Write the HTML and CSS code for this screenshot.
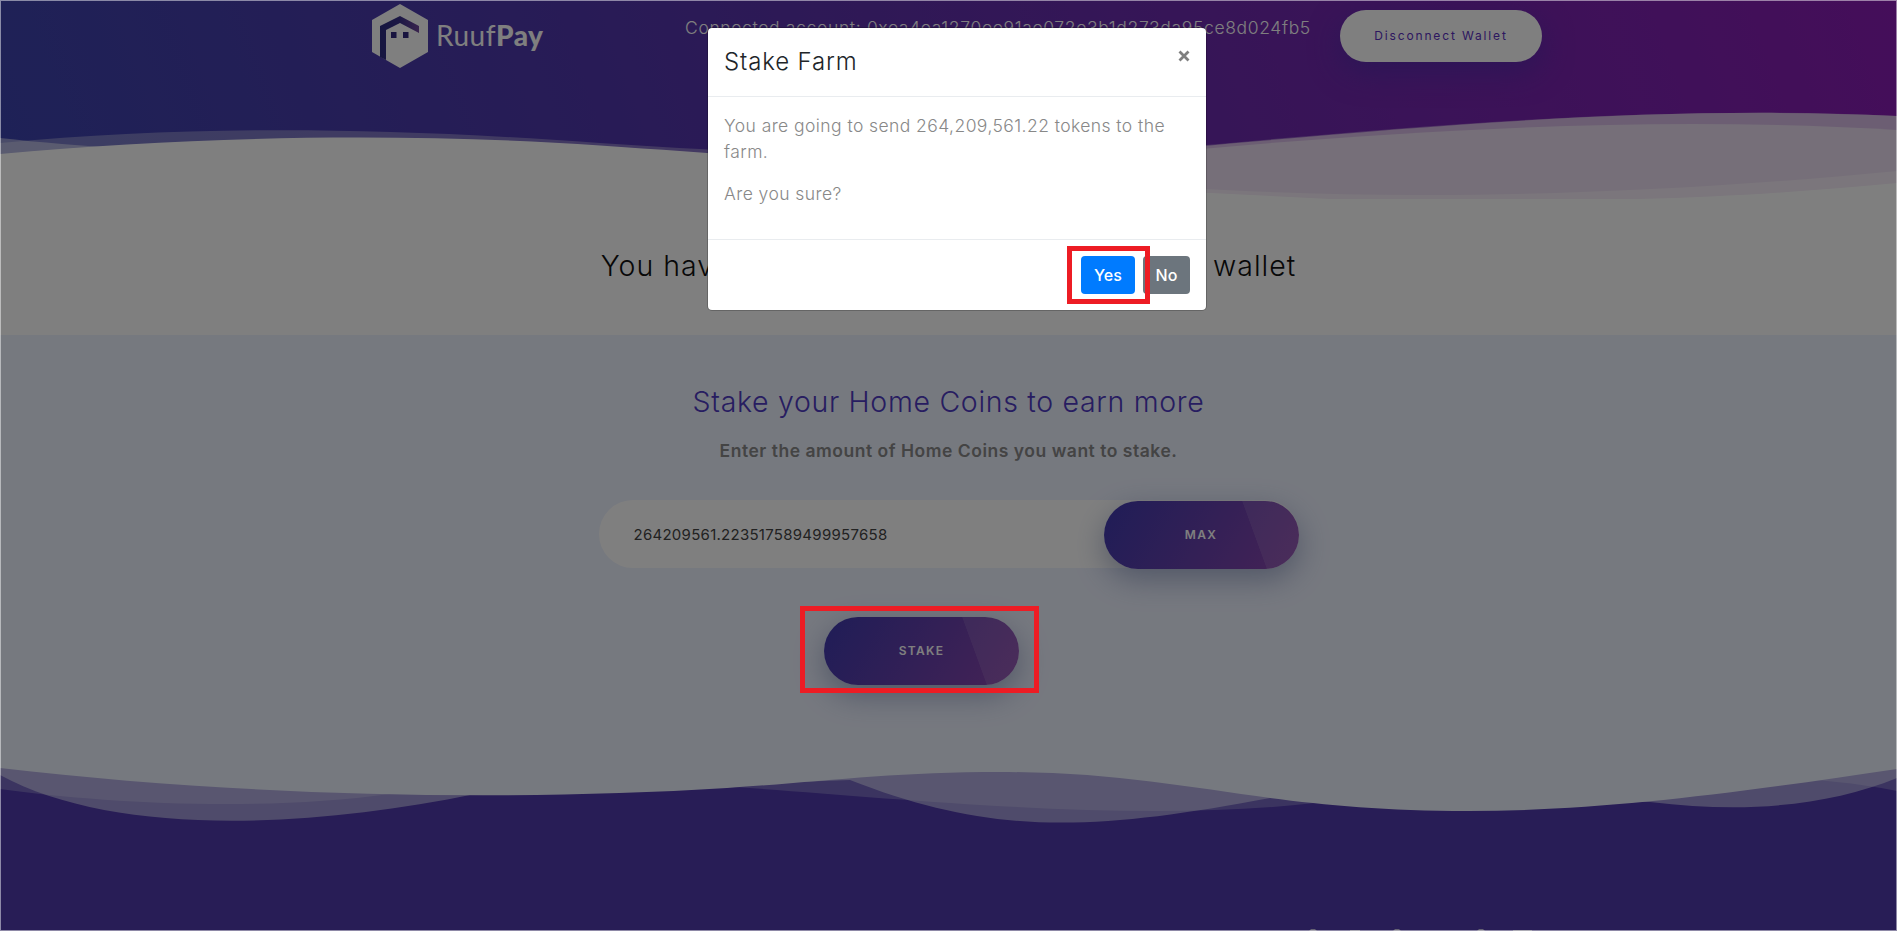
FILE: index.html
```
<!DOCTYPE html>
<html lang="en">
<head>
<meta charset="utf-8">
<title>RuufPay</title>
<link rel="stylesheet" href="styles.css">
</head>
<body>
<header class="header">
  <svg class="waves" viewBox="0 0 1897 200" preserveAspectRatio="none">
    <path fill="#fff" fill-opacity=".3" d="M0 143C180 127 350 125 600 143C760 153 950 166 1206 145C1400 128 1650 104 1897 116V200H0Z"/>
    <path fill="#fff" fill-opacity=".45" d="M0 138C80 147 180 152 260 158L0 170Z"/>
    <path fill="#fff" d="M0 154C200 135 420 133 600 145.500C800 159 960 172 1206 194L1897 200H0Z"/>
    <path fill="#fff" d="M800 200V150L1206 145V200Z"/>
    <path fill="#d8bce6" d="M1190 147C1400 129 1650 104 1897 116V200H1190Z"/>
    <path fill="#ecdef2" d="M1190 150C1400 131 1650 115 1897 130V200H1190Z"/>
    <path fill="#f6ecf8" d="M1190 188C1400 201 1640 196 1897 171V200H1190Z"/>
    <path fill="#fff" d="M1190 192L1330 199H1638C1730 197 1810 191 1897 183V200H1190Z"/>
  </svg>
  <div class="bar">
    <div class="logo">
      <svg class="mark" width="56" height="64" viewBox="0 0 56 64">
        <defs><linearGradient id="roof"><stop offset="0" stop-color="#2c2c80"/><stop offset=".5" stop-color="#38308a"/><stop offset="1" stop-color="#74489c"/></linearGradient></defs>
        <path fill="#fff" d="M28 0L56 16V48L28 64L0 48V16Z"/>
        <path fill="url(#roof)" d="M8 22L28 12L47 22V29L28 19L14 26V56L8 53Z"/>
        <path fill="#31287e" d="M19 28h5.500v6H19zM31 28h5.500v6H31z"/>
      </svg>
      <span class="brand">Ruuf<b>Pay</b></span>
    </div>
    <span class="account">Connected account: 0xea4ea1270ee91ae072e3b1d273da95ce8d024fb5</span>
    <a class="disconnect">Disconnect Wallet</a>
  </div>
</header>
<section class="balance"><h2>You have 264,209,561 Home Coins in your wallet</h2></section>
<section class="stake">
  <h2>Stake your Home Coins to earn more</h2>
  <p class="hint">Enter the amount of Home Coins you want to stake.</p>
  <div class="field"><span class="amount">264209561.223517589499957658</span><a class="btn">MAX</a></div>
  <a class="btn submit">STAKE</a>
</section>
<footer class="footer">
  <svg class="waves" viewBox="0 760 1897 171" preserveAspectRatio="none">
    <g fill="#edf2ff">
      <path fill-opacity=".5" d="M0 760V775C110 835 300 830 475 794L850 780C990 835 1090 832 1270 798L1650 802C1750 814 1830 805 1897 778V760Z"/>
      <path fill-opacity=".25" d="M0 760V789C100 803 260 812 390 794L735 787C900 798 1130 824 1315 803L1765 777C1810 779 1850 782 1897 791V760Z"/>
      <path d="M0 760V768C240 796 500 802 727 788C820 782 890 772 1000 772C1180 772 1260 811 1468 811C1600 811 1730 794 1897 769V760Z"/>
    </g>
    <path fill="#fff" fill-opacity=".7" d="M1309 931l2-2h4l2 2zM1350 931v-1h10v1zM1393 931l2-2h4l2 2zM1477 931l2-2h4l2 2zM1513 931v-1h19v1z"/>
  </svg>
</footer>
<div class="backdrop"></div>
<div class="modal">
  <div class="modal-head"><h5>Stake Farm</h5><svg class="close" width="12" height="12" viewBox="0 0 12 12"><path d="M1.500 1.500l9 9M10.500 1.500l-9 9" stroke="#7f7f7f" stroke-width="2.800"/></svg></div>
  <div class="modal-body"><p><span class="line">You are going to send 264,209,561.22 tokens to the</span> farm.</p><p class="sure">Are you sure?</p></div>
  <div class="modal-foot"><a class="mbtn yes">Yes</a><a class="mbtn no">No</a></div>
</div>
<div class="mark-box mark-yes"></div>
<div class="mark-box mark-stake"></div>
<div class="frame"></div>
</body>
</html>
```
FILE: styles.css
```
* { box-sizing: border-box; }
body { margin: 0; width: 1897px; height: 931px; overflow: hidden; position: relative; background: #fff; font-family: Inter, "Open Sans", sans-serif; font-size: 17.5px; color: #212529; }
h2, h5, p { margin: 0; font-weight: 300; }
.header { position: relative; height: 200px; background: linear-gradient(70deg, #3c44ae, #5037ac 32%, #6a2cae 60%, #8a1cb4); }
.waves { position: absolute; inset: 0; width: 100%; height: 100%; display: block; }
.bar { position: relative; display: flex; align-items: flex-start; padding: 4px 355px 0 372px; white-space: nowrap; }
.logo { display: flex; width: 313px; }
.brand { color: #fff; font: 400 28px/62px Lato, sans-serif; margin-left: 8px; letter-spacing: .5px; }
.brand b { font-weight: 900; }
.account { color: #fff; font-weight: 350; line-height: 26px; letter-spacing: .65px; margin-top: 11px; width: 655px; }
.disconnect { margin-top: 6px; width: 202px; height: 52px; border-radius: 26px; background: #fff; color: #5a2fc0; font-size: 12px; line-height: 52px; text-align: center; letter-spacing: 1.85px; box-shadow: 0 10px 30px rgba(60,50,170,.5); }
.balance { height: 135px; padding-top: 46px; text-align: center; }
.balance h2 { font-size: 28.5px; line-height: 40px; letter-spacing: 1px; color: #111; white-space: nowrap; }
.stake { height: 425px; background: #edf2ff; padding-top: 47px; display: flex; flex-direction: column; align-items: center; }
.stake h2 { font-size: 28.5px; line-height: 40px; letter-spacing: .68px; color: #4f3bc2; }
.hint { font-weight: 600; color: #888; line-height: 28px; letter-spacing: .52px; margin-top: 15px; }
.field { margin-top: 35px; width: 700px; height: 68px; border-radius: 34px; background: #fff; display: flex; justify-content: space-between; align-items: center; padding-left: 35px; }
.amount { font-size: 15px; letter-spacing: .27px; color: #444; }
.btn { width: 195px; height: 68px; border-radius: 34px; line-height: 68px; text-align: center; color: #fff; font-size: 12px; font-weight: 600; letter-spacing: 1.3px; background: linear-gradient(70deg, transparent 74%, rgba(255,255,255,.1) 74.300%), linear-gradient(120deg, #3f3aae, #8c46ac); box-shadow: 0 10px 30px rgba(50,70,130,.4); }
.field .btn { margin-top: 2px; }
.submit { margin: 49px 54px 0 0; }
.footer { position: relative; height: 171px; background: #503aac; }
.backdrop { position: absolute; inset: 0; background: rgba(0,0,0,.5); }
.modal { position: absolute; left: 707px; top: 27px; width: 500px; height: 284px; border: 1px solid rgba(0,0,0,.2); border-radius: 5px; background: #fff; background-clip: padding-box; }
.modal-head { height: 69px; border-bottom: 1px solid #e9ecef; padding: 16px; display: flex; justify-content: space-between; }
.modal-head h5 { font-size: 24px; line-height: 36px; letter-spacing: .85px; }
.close { margin-top: 6px; }
.modal-body { height: 143px; padding: 16px; border-bottom: 1px solid #e9ecef; color: #888; line-height: 26px; letter-spacing: .43px; }
.modal-body p { font-weight: 350; }
.modal-body .line { display: block; white-space: nowrap; }
.modal-body .sure { margin-top: 16px; }
.modal-foot { display: flex; justify-content: flex-end; gap: 8px; padding: 16px; }
.mbtn { height: 38px; border-radius: 4px; color: #fff; font-size: 16px; font-weight: 500; line-height: 38px; text-align: center; }
.yes { width: 54px; background: #007bff; }
.no { width: 47px; background: #6c757d; }
.mark-box { position: absolute; border: 5px solid #ed1c24; }
.mark-yes { left: 1067px; top: 246px; width: 83px; height: 58px; }
.mark-stake { left: 800px; top: 606px; width: 239px; height: 87px; }
.frame { position: absolute; inset: 0; border: 1px solid rgba(255,255,255,.48); }
```
